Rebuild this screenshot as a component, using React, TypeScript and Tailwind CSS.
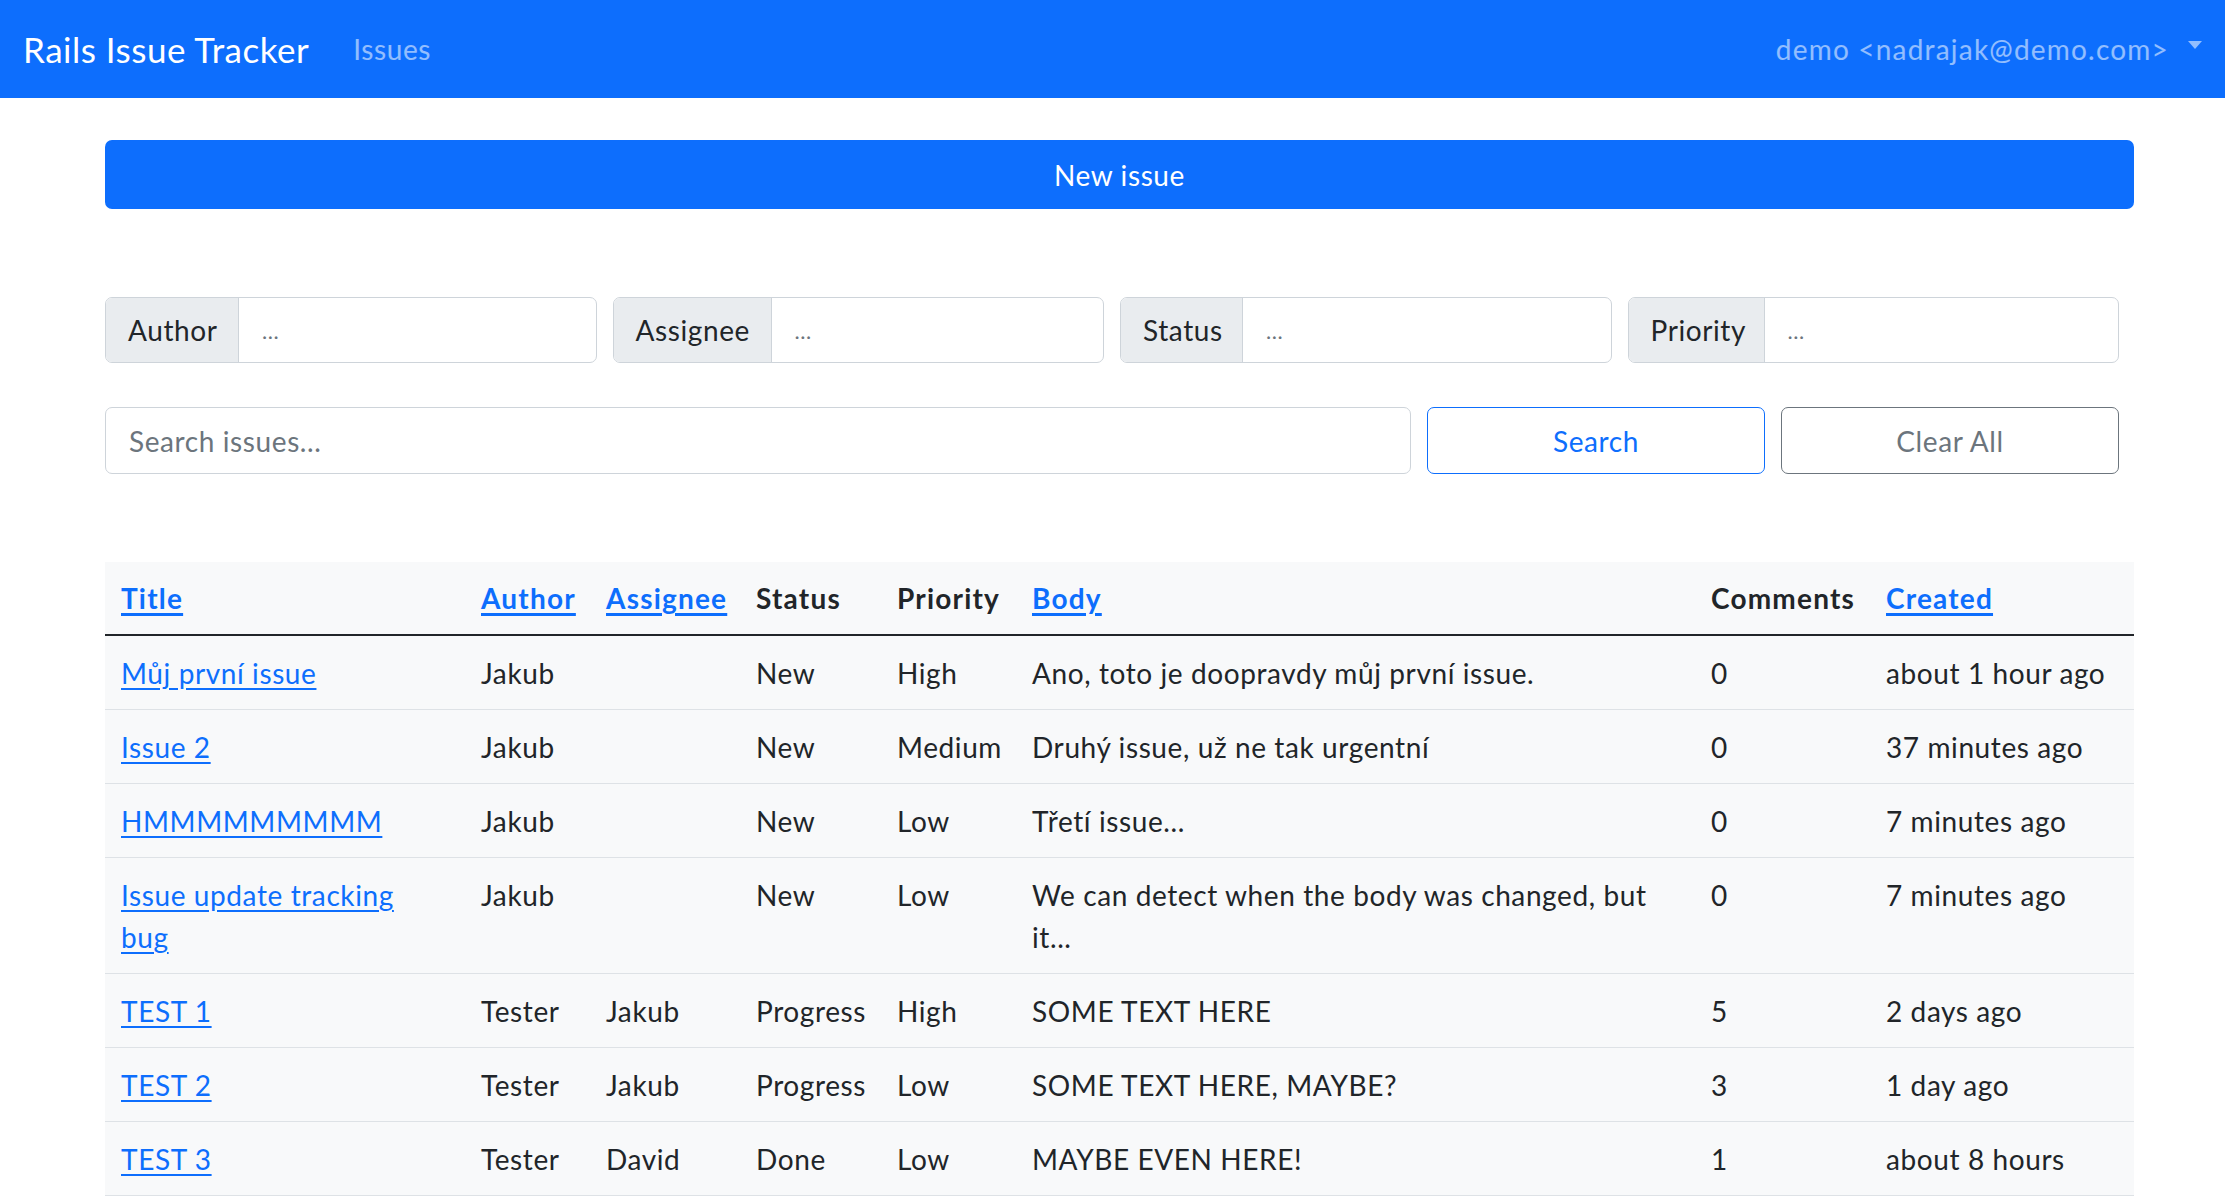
const filters = [
  { label: "Author", width: "w-[133px]" },
  { label: "Assignee", width: "w-[158px]" },
  { label: "Status", width: "w-[122px]" },
  { label: "Priority", width: "w-[136px]" },
];

const issues = [
  { title: "Můj první issue", author: "Jakub", assignee: "", status: "New", priority: "High", body: "Ano, toto je doopravdy můj první issue.", comments: 0, created: "about 1 hour ago" },
  { title: "Issue 2", author: "Jakub", assignee: "", status: "New", priority: "Medium", body: "Druhý issue, už ne tak urgentní", comments: 0, created: "37 minutes ago" },
  { title: "HMMMMMMMMM", author: "Jakub", assignee: "", status: "New", priority: "Low", body: "Třetí issue...", comments: 0, created: "7 minutes ago" },
  { title: "Issue update tracking bug", author: "Jakub", assignee: "", status: "New", priority: "Low", body: "We can detect when the body was changed, but it...", comments: 0, created: "7 minutes ago" },
  { title: "TEST 1", author: "Tester", assignee: "Jakub", status: "Progress", priority: "High", body: "SOME TEXT HERE", comments: 5, created: "2 days ago" },
  { title: "TEST 2", author: "Tester", assignee: "Jakub", status: "Progress", priority: "Low", body: "SOME TEXT HERE, MAYBE?", comments: 3, created: "1 day ago" },
  { title: "TEST 3", author: "Tester", assignee: "David", status: "Done", priority: "Low", body: "MAYBE EVEN HERE!", comments: 1, created: "about 8 hours" },
];

function Navbar() {
  return (
    <nav className="h-[98px] bg-[#0d6efd] flex items-center pl-[23px] pr-[22px]">
      <span className="text-white text-[35px] leading-none tracking-[0.5px] mr-[44px]">Rails Issue Tracker</span>
      <a className="text-white/55 text-[28px] leading-none tracking-[0.6px]">Issues</a>
      <div className="ml-auto flex items-center text-white/55 text-[28px] leading-none">
        <span className="tracking-[1.2px]">demo &lt;nadrajak@demo.com&gt;</span>
        <svg className="ml-[18px] mt-[-8px]" width="16" height="10" viewBox="0 0 16 10">
          <polygon points="1,1 15,1 8,9" fill="currentColor" />
        </svg>
      </div>
    </nav>
  );
}

function Filters() {
  return (
    <div className="flex gap-[16px] w-[2014px]">
      {filters.map((f) => (
        <div key={f.label} className="flex-1 flex h-[66px] border border-[#ced4da] rounded-[7px] overflow-hidden">
          <div className={`${f.width} bg-[#e9ecef] border-r border-[#ced4da] flex items-center px-[22px] text-[#212529]`}>
            {f.label}
          </div>
          <div className="flex-1 flex items-center px-[23px] text-[#6c757d] text-[22px]">...</div>
        </div>
      ))}
    </div>
  );
}

function SearchRow() {
  return (
    <div className="flex gap-[16px] w-[2014px] mt-[44px]">
      <div className="w-[1306px] h-[67px] border border-[#ced4da] rounded-[7px] flex items-center px-[23px] text-[#6c757d]">
        Search issues...
      </div>
      <button className="w-[338px] h-[67px] border border-[#0d6efd] rounded-[7px] text-[#0d6efd]">Search</button>
      <button className="w-[338px] h-[67px] border border-[#6c757d] rounded-[7px] text-[#6c757d]">Clear All</button>
    </div>
  );
}

function IssueTable() {
  const th = "text-left font-bold tracking-[1.2px] px-[16px] py-[15px] leading-[42px] align-top";
  const td = "px-[16px] pt-[16px] pb-[15px] leading-[42px] align-top";
  const link = "text-[#0d6efd] underline underline-offset-[4px]";
  const headLink = "text-[#0d6efd] underline decoration-[3px] underline-offset-[4px]";
  return (
    <table className="w-[2029px] table-fixed border-collapse bg-[#f8f9fa] mt-[88px] text-[#212529]">
      <colgroup>
        <col className="w-[360px]" />
        <col className="w-[125px]" />
        <col className="w-[150px]" />
        <col className="w-[141px]" />
        <col className="w-[135px]" />
        <col className="w-[679px]" />
        <col className="w-[175px]" />
        <col className="w-[264px]" />
      </colgroup>
      <thead>
        <tr className="border-b-2 border-[#212529]">
          <th className={th}><a className={headLink}>Title</a></th>
          <th className={th}><a className={headLink}>Author</a></th>
          <th className={th}><a className={headLink}>Assignee</a></th>
          <th className={th}>Status</th>
          <th className={th}>Priority</th>
          <th className={th}><a className={headLink}>Body</a></th>
          <th className={th}>Comments</th>
          <th className={th}><a className={headLink}>Created</a></th>
        </tr>
      </thead>
      <tbody className="tracking-[0.6px]">
        {issues.map((row) => (
          <tr key={row.title} className="border-b border-[#dee2e6]">
            <td className={`${td} pr-[30px]`}><a className={link}>{row.title}</a></td>
            <td className={td}>{row.author}</td>
            <td className={td}>{row.assignee}</td>
            <td className={td}>{row.status}</td>
            <td className={td}>{row.priority}</td>
            <td className={`${td} pr-[20px]`}>{row.body}</td>
            <td className={td}>{row.comments}</td>
            <td className={td}>{row.created}</td>
          </tr>
        ))}
      </tbody>
    </table>
  );
}

export default function App() {
  return (
    <div className="min-h-screen bg-white text-[28px] text-[#212529] font-['Lato',sans-serif]">
      <Navbar />
      <main className="pl-[105px] pt-[42px]">
        <button className="w-[2029px] h-[69px] bg-[#0d6efd] text-white tracking-[0.6px] rounded-[7px] mb-[88px]">New issue</button>
        <div className="tracking-[0.6px]">
          <Filters />
          <SearchRow />
        </div>
        <IssueTable />
      </main>
    </div>
  );
}
